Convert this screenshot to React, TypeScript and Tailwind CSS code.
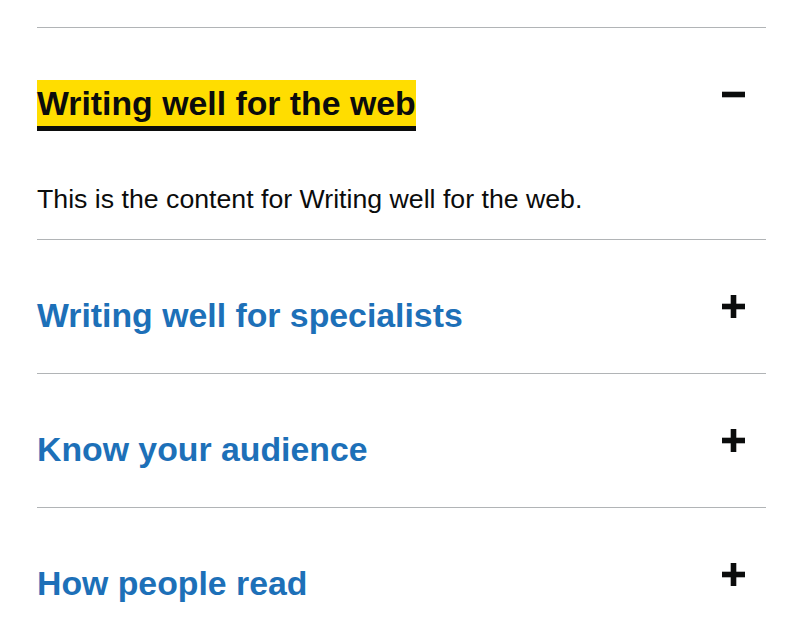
import React from 'react';

interface Section {
  title: string;
  content: string;
  open?: boolean;
}

const sections: Section[] = [
  { title: 'Writing well for the web', content: 'This is the content for Writing well for the web.', open: true },
  { title: 'Writing well for specialists', content: 'This is the content for Writing well for specialists.' },
  { title: 'Know your audience', content: 'This is the content for Know your audience.' },
  { title: 'How people read', content: 'This is the content for How people read.' },
];

const ToggleIcon: React.FC<{ open?: boolean }> = ({ open }) => (
  <svg width="23" height="23" viewBox="0 0 23 23" className="absolute right-[21px] top-[55px]" aria-hidden="true">
    <rect x="0" y="8.7" width="23" height="5.6" fill="#0b0c0c" />
    {!open && <rect x="8.7" y="0" width="5.6" height="23" fill="#0b0c0c" />}
  </svg>
);

const App: React.FC = () => {
  return (
    <div className="min-h-[642px] bg-white pl-[37px] pr-[34px] pt-[27px] font-['Liberation_Sans',Arial,sans-serif] text-[#0b0c0c]">
      <div>
        {sections.map((s) => (
          <div key={s.title} className="border-t border-[#b1b4b6]">
            <div className="relative pt-[52px] pb-[35px] pr-[60px]">
              <h2 className="text-[33.8px] font-bold leading-[46px]">
                {s.open ? (
                  <span className="inline-block align-top bg-[#ffdd00] text-[#0b0c0c] shadow-[0_5px_0_#0b0c0c]">
                    {s.title}
                  </span>
                ) : (
                  <span className="text-[#1d70b8]">{s.title}</span>
                )}
              </h2>
              <ToggleIcon open={s.open} />
            </div>
            {s.open && (
              <div className="pt-[21px] pb-[22px]">
                <p className="text-[26.7px] leading-[35px]">{s.content}</p>
              </div>
            )}
          </div>
        ))}
      </div>
    </div>
  );
};

export default App;
